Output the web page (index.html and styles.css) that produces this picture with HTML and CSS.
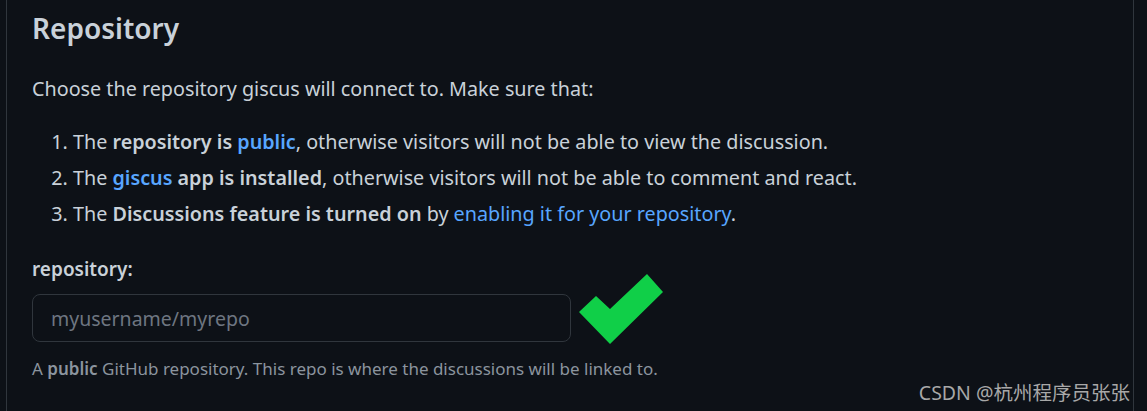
FILE: index.html
```html
<!DOCTYPE html>
<html lang="en">
<head>
<meta charset="utf-8">
<title>Repository</title>
<link rel="stylesheet" href="styles.css">
</head>
<body>
<main class="panel">
  <h3 class="title">Repository</h3>
  <p class="intro">Choose the repository giscus will connect to. Make sure that:</p>
  <ol class="steps">
    <li>The <strong>repository is <a href="#">public</a></strong>, otherwise visitors will not be able to view the discussion.</li>
    <li>The <strong><a href="#">giscus</a> app is installed</strong>, otherwise visitors will not be able to comment and react.</li>
    <li>The <strong>Discussions feature is turned on</strong> by <a href="#">enabling it for your repository</a>.</li>
  </ol>
  <div class="field">
    <label class="label" for="repo">repository:</label>
    <div class="input-row">
      <input id="repo" class="input" type="text" placeholder="myusername/myrepo">
      <svg class="check" width="86" height="72" viewBox="0 0 86 72" aria-hidden="true">
        <polygon points="2,38 19,22 33,35 70,0 86,18 33,70" fill="#10cf48"/>
      </svg>
    </div>
    <p class="hint">A <strong>public</strong> GitHub repository. This repo is where the discussions will be linked to.</p>
  </div>
</main>
<div class="watermark">CSDN @杭州程序员张张</div>
</body>
</html>
```

FILE: styles.css
```css
html, body {
  margin: 0;
  padding: 0;
  background: #0d1117;
  height: 100%;
}
body {
  font-family: "Noto Sans", "Open Sans", sans-serif;
  color: #c9d1d9;
  overflow: hidden;
}
.panel {
  margin-left: 6px;
  width: 1076px;
  min-height: 411px;
  box-sizing: content-box;
  border-left: 1px solid #30363d;
  border-right: 1px solid #30363d;
  padding: 7px 25px 0 25px;
}
.title {
  margin: 0;
  font-size: 28px;
  font-weight: 600;
  line-height: 42px;
  color: #c9d1d9;
}
.intro {
  margin: 25px 0 0;
  font-size: 19.75px;
  line-height: 30px;
}
.steps {
  margin: 23px 0 0;
  padding-left: 41px;
  font-size: 19.75px;
  line-height: 30px;
}
.steps li + li {
  margin-top: 6px;
}
.steps strong {
  font-weight: 600;
}
a {
  color: #58a6ff;
  text-decoration: none;
}
.field {
  margin-top: 25px;
}
.label {
  display: block;
  font-size: 19px;
  font-weight: 600;
  line-height: 30px;
}
.input-row {
  display: flex;
  align-items: flex-start;
  gap: 6px;
  margin-top: 10px;
  height: 48px;
}
.input {
  width: 539px;
  height: 48px;
  box-sizing: border-box;
  background: #0d1117;
  border: 1px solid #30363d;
  border-radius: 8px;
  padding: 0 18px;
  font-family: inherit;
  font-size: 19.5px;
  color: #c9d1d9;
  outline: none;
}
.input::placeholder {
  color: #6e7681;
}
.check {
  flex: none;
  margin-top: -20px;
}
.hint {
  margin: 14px 0 0;
  font-size: 17px;
  line-height: 26px;
  color: #8b949e;
}
.hint strong {
  font-weight: 600;
}
.watermark {
  position: absolute;
  right: 17px;
  bottom: 6px;
  font-family: "Noto Sans", "Noto Sans CJK SC", sans-serif;
  font-size: 19.5px;
  line-height: 24px;
  color: #a8a8a8;
}
```
